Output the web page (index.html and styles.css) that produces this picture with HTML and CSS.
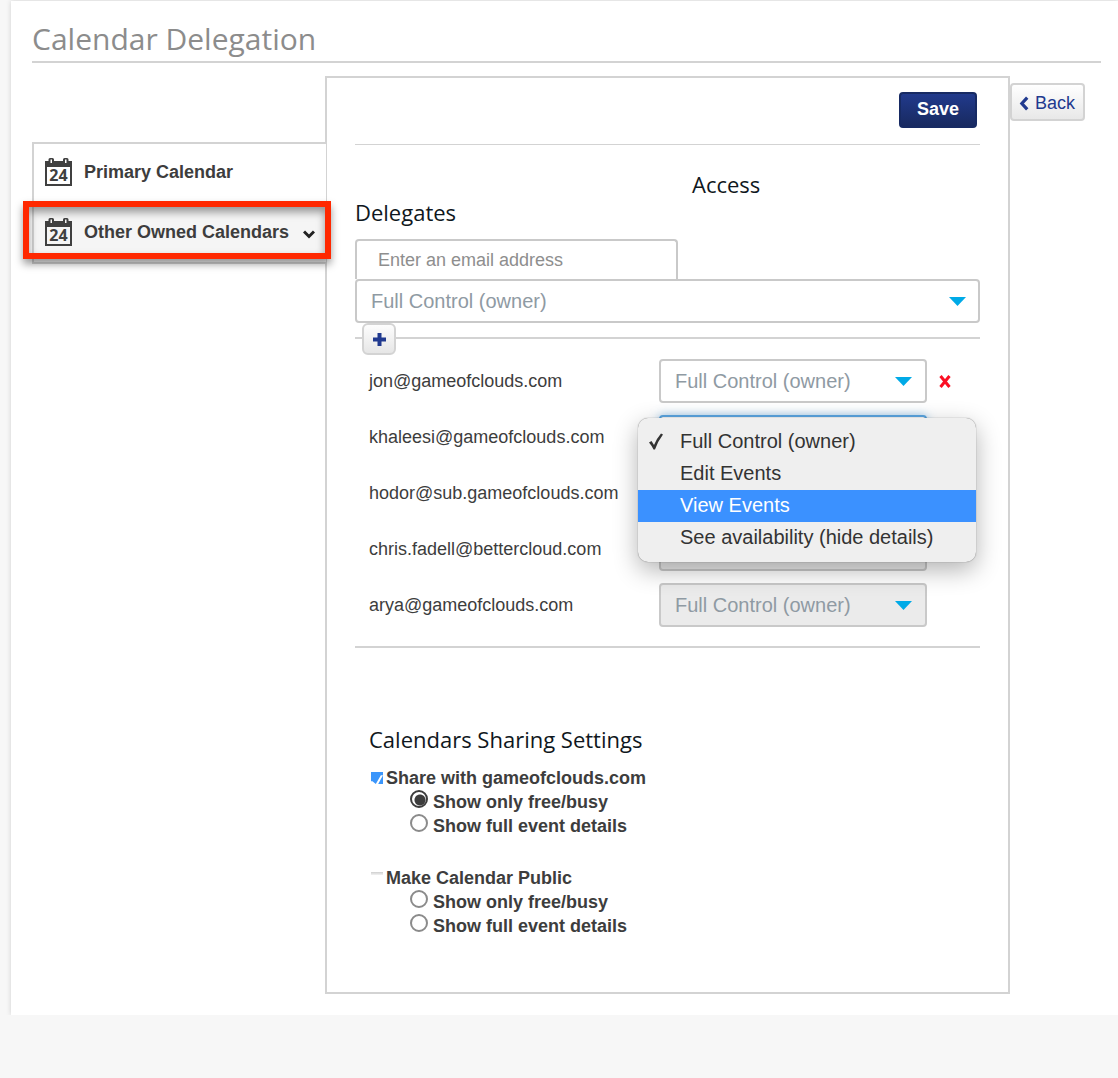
FILE: index.html
```html
<!DOCTYPE html>
<html lang="en">
<head>
<meta charset="utf-8">
<title>Calendar Delegation</title>
<link rel="stylesheet" href="styles.css">
</head>
<body>
<main class="page">
  <h1 class="page-title">Calendar Delegation</h1>
  <div class="columns">
    <nav class="sidebar" aria-label="Calendars">
      <a class="side-item" href="#primary">
        <svg class="calendar-icon" viewBox="0 0 28 28" aria-hidden="true"><path fill="#404040" fill-rule="evenodd" d="M0 3H3.500V1.500Q3.500 0 5 0H7.500Q9 0 9 1.500V3H18V1.500Q18 0 19.500 0H22Q23.500 0 23.500 1.500V3H27V28H0ZM2 9V26H25V9ZM5.500 1.500V5H7V1.500ZM20 1.500V5H21.500V1.500Z"/><text x="13.500" y="23" text-anchor="middle" class="calendar-day">24</text></svg>
        Primary Calendar
      </a>
      <a class="side-item side-item-active" href="#other">
        <svg class="calendar-icon" viewBox="0 0 28 28" aria-hidden="true"><path fill="#404040" fill-rule="evenodd" d="M0 3H3.500V1.500Q3.500 0 5 0H7.500Q9 0 9 1.500V3H18V1.500Q18 0 19.500 0H22Q23.500 0 23.500 1.500V3H27V28H0ZM2 9V26H25V9ZM5.500 1.500V5H7V1.500ZM20 1.500V5H21.500V1.500Z"/><text x="13.500" y="23" text-anchor="middle" class="calendar-day">24</text></svg>
        Other Owned Calendars
        <svg class="chevron" viewBox="0 0 12 9" aria-hidden="true"><path d="M1 1.500L6 6.500L11 1.500" fill="none" stroke="#222" stroke-width="3"/></svg>
        <span class="highlight"></span>
      </a>
    </nav>
    <section class="panel">
      <div class="toolbar"><button class="save" type="button">Save</button></div>
      <h2 class="heading heading-access">Access</h2>
      <h2 class="heading">Delegates</h2>
      <div class="add-form">
        <input class="email" type="email" placeholder="Enter an email address" aria-label="Email address">
        <span class="select"><select aria-label="Access for new delegate"><option>Full Control (owner)</option></select></span>
      </div>
      <div class="add-bar">
        <button class="add" type="button" aria-label="Add delegate"><svg viewBox="0 0 13 13" aria-hidden="true"><path d="M4.500 0H8.500V4.500H13V8.500H8.500V13H4.500V8.500H0V4.500H4.500Z" fill="#213a8f"/></svg></button>
      </div>
      <ul class="delegates">
        <li class="delegate">
          <label for="d1">jon@gameofclouds.com</label>
          <span class="select"><select id="d1"><option>Full Control (owner)</option></select></span>
          <button class="remove" type="button" aria-label="Remove"><svg viewBox="0 0 12 14" aria-hidden="true"><path d="M1.500 2L10.500 13M10.500 2L1.500 13" stroke="#fb0f24" stroke-width="3"/></svg></button>
        </li>
        <li class="delegate">
          <label for="d2">khaleesi@gameofclouds.com</label>
          <span class="select select-open"><select id="d2"><option>Full Control (owner)</option></select>
            <span class="menu" role="listbox" aria-label="Access">
              <span class="menu-item" role="option" aria-selected="true"><svg class="tick" viewBox="0 0 14 17" aria-hidden="true"><path d="M0 9.500L2.500 8L5 12Q8 5 12 .5L14 1.500Q9 8 6 16.500H4.500Q3 13 0 9.500Z" fill="#333"/></svg>Full Control (owner)</span>
              <span class="menu-item" role="option" aria-selected="false">Edit Events</span>
              <span class="menu-item menu-item-hover" role="option" aria-selected="false">View Events</span>
              <span class="menu-item" role="option" aria-selected="false">See availability (hide details)</span>
            </span>
          </span>
        </li>
        <li class="delegate">
          <label for="d3">hodor@sub.gameofclouds.com</label>
          <span class="select"><select id="d3"><option>Full Control (owner)</option></select></span>
        </li>
        <li class="delegate">
          <label for="d4">chris.fadell@bettercloud.com</label>
          <span class="select"><select id="d4" disabled><option>Full Control (owner)</option></select></span>
        </li>
        <li class="delegate">
          <label for="d5">arya@gameofclouds.com</label>
          <span class="select"><select id="d5" disabled><option>Full Control (owner)</option></select></span>
        </li>
      </ul>
      <div class="sharing">
        <h2 class="heading">Calendars Sharing Settings</h2>
        <div class="share-group">
          <label class="check"><input type="checkbox" checked>Share with gameofclouds.com</label>
          <label class="choice"><input type="radio" name="domain" checked>Show only free/busy</label>
          <label class="choice"><input type="radio" name="domain">Show full event details</label>
        </div>
        <div class="share-group">
          <label class="check"><input type="checkbox">Make Calendar Public</label>
          <label class="choice"><input type="radio" name="public">Show only free/busy</label>
          <label class="choice"><input type="radio" name="public">Show full event details</label>
        </div>
      </div>
    </section>
    <div class="aside">
      <button class="back" type="button"><svg viewBox="0 0 9 14" aria-hidden="true"><path d="M7.500 1.500L2.500 7L7.500 12.500" fill="none" stroke="#213a8f" stroke-width="3"/></svg>Back</button>
    </div>
  </div>
</main>
</body>
</html>
```
FILE: styles.css
```css
* {
  box-sizing: border-box;
}

body {
  margin: 0;
  background: #f7f7f7;
  color: #3d3d3d;
  font: 18px/24px "Liberation Sans", Arial, sans-serif;
}

button,
input,
select {
  margin: 0;
  font: inherit;
  appearance: none;
}

.page {
  margin: 1px 0 0 11px;
  padding: 16px 17px 21px 21px;
  background: #fff;
  box-shadow: 0 0 5px rgba(0, 0, 0, .16);
}

.page-title {
  margin: 0 0 13px;
  border-bottom: 2px solid #d3d3d3;
  color: #8c8c8c;
  font: 30px/44px "Open Sans", sans-serif;
}

.columns {
  display: flex;
  align-items: flex-start;
}

/* Calendar list */
.sidebar {
  position: relative;
  z-index: 1;
  flex: 0 0 294px;
  margin: 66px -1px 0 0;
  border: 2px solid #d3d3d3;
  border-right: 0;
  background: #fff;
}

.side-item {
  position: relative;
  display: flex;
  align-items: center;
  height: 60px;
  padding: 0 0 4px 11px;
  color: #3d3d3d;
  font-weight: bold;
  text-decoration: none;
}

.side-item-active {
  height: 58px;
  padding-bottom: 2px;
  background: #f5f5f5;
}

.calendar-icon {
  width: 28px;
  height: 28px;
  margin-right: 11px;
}

.calendar-day {
  font: bold 16px "Open Sans", sans-serif;
  fill: #404040;
}

.chevron {
  width: 12px;
  height: 9px;
  margin: 5px 0 0 14px;
}

.highlight {
  position: absolute;
  inset: -3px -5px 3px -11px;
  border: 6px solid #ff2800;
  box-shadow: 0 5px 8px rgba(0, 0, 0, .4), inset 0 5px 8px rgba(0, 0, 0, .4);
}

/* Main panel */
.panel {
  flex: 1;
  min-width: 0;
  padding: 14px 28px 39px;
  border: 2px solid #d3d3d3;
}

.toolbar {
  display: flex;
  justify-content: flex-end;
  padding: 0 3px 16px;
  border-bottom: 1px solid #d3d3d3;
  margin-bottom: 25px;
}

.save {
  width: 78px;
  height: 36px;
  padding: 0 0 2px;
  border: 2px solid #172a63;
  border-radius: 4px;
  background: linear-gradient(#213a8c, #182a60);
  color: #fff;
  font-weight: bold;
}

.heading {
  margin: 0;
  color: #0f1720;
  font: 22px/28px "Open Sans", sans-serif;
}

.heading-access {
  padding-left: 337px;
}

.add-form {
  margin-top: 13px;
}

.email {
  display: block;
  width: 323px;
  height: 40px;
  padding: 0 21px;
  border: 2px solid #c9c9c9;
  border-bottom: 0;
  border-radius: 4px 4px 0 0;
  background: #fff;
}

.email::placeholder {
  color: #8e8e8e;
}

.select {
  position: relative;
  display: block;
}

.select::after {
  content: "";
  position: absolute;
  top: 18px;
  right: 14px;
  width: 17px;
  height: 9px;
  background: #00aae7;
  clip-path: polygon(0 0, 100% 0, 50% 100%);
  pointer-events: none;
}

.delegate .select::after {
  right: 15px;
}

.select select {
  display: block;
  width: 100%;
  height: 44px;
  padding: 0 14px;
  border: 2px solid #c9c9c9;
  border-radius: 4px;
  background: #fff;
  color: #8f9aa3;
  font-size: 20px;
  opacity: 1;
}

.select select:disabled {
  background: #ebebeb;
}

.select-open select {
  border-color: #5aa5e0;
  box-shadow: 0 0 10px rgba(90, 165, 224, .6);
}

.add-bar {
  height: 30px;
  padding-left: 7px;
  background: linear-gradient(#d3d3d3, #d3d3d3) 0 14px / 100% 2px no-repeat;
}

.add {
  display: flex;
  align-items: center;
  justify-content: center;
  width: 34px;
  height: 32px;
  padding: 0;
  border: 2px solid #d3d3d3;
  border-radius: 6px;
  background: linear-gradient(#fdfdfd, #e6e6e6);
}

.add svg {
  width: 13px;
  height: 13px;
}

/* Delegates */
.delegates {
  margin: 0;
  padding: 0 0 13px 14px;
  border-bottom: 2px solid #d3d3d3;
  list-style: none;
}

.delegate {
  display: grid;
  grid-template-columns: 1fr 268px 41px;
  column-gap: 12px;
  align-items: center;
  height: 56px;
}

.delegate label {
  white-space: nowrap;
}

.remove {
  width: 12px;
  height: 14px;
  padding: 0;
  border: 0;
  background: none;
}

.remove svg {
  display: block;
  width: 12px;
  height: 14px;
}

/* Open access menu */
.menu {
  position: absolute;
  z-index: 2;
  top: 3px;
  left: -21px;
  width: 338px;
  padding: 8px 0;
  border-radius: 10px;
  background: #efefef;
  box-shadow: 0 0 1px rgba(0, 0, 0, .6), 0 8px 24px rgba(0, 0, 0, .3);
  color: #333;
  font-size: 20px;
  line-height: 31px;
}

.menu-item {
  position: relative;
  display: block;
  height: 32px;
  padding-left: 42px;
}

.menu-item-hover {
  background: #3b91ff;
  color: #fff;
}

.tick {
  position: absolute;
  top: 7px;
  left: 11px;
  width: 14px;
  height: 17px;
}

/* Sharing */
.sharing {
  padding: 77px 0 0 14px;
}

.share-group {
  padding-top: 13px;
  margin-bottom: 15px;
  font-weight: bold;
}

.check,
.choice {
  display: flex;
  align-items: center;
  height: 24px;
}

.choice {
  padding-left: 41px;
}

.check input {
  width: 12px;
  height: 12px;
  margin: 0 3px 0 2px;
  background: linear-gradient(#cfcfcf, #f2f2f2) 0 0 / 100% 3px no-repeat;
}

.check input:checked {
  background: #3b96fb;
}

.check input:checked::before {
  content: "";
  display: block;
  height: 12px;
  background: #fff;
  clip-path: polygon(0 78%, 12% 78%, 40% 100%, 82% 28%, 100% 28%, 60% 100%, 0 100%);
}

.choice input {
  width: 18px;
  height: 18px;
  margin: 0 5px 6px 0;
  border: 2px solid #8b8b8b;
  border-radius: 50%;
}

.choice input:checked {
  border-color: #3d3d3d;
  background: radial-gradient(circle at 8px 8px, #3d3d3d 5px, transparent 6px);
}

/* Back link column */
.aside {
  flex: 0 0 91px;
  padding-top: 7px;
}

.back {
  display: flex;
  align-items: center;
  gap: 6px;
  width: 75px;
  height: 38px;
  padding: 2px 0 0 7px;
  border: 2px solid #d3d3d3;
  border-radius: 4px;
  background: linear-gradient(#fff, #e8e8e8);
  color: #213a8f;
}

.back svg {
  width: 10px;
  height: 15px;
}
```
